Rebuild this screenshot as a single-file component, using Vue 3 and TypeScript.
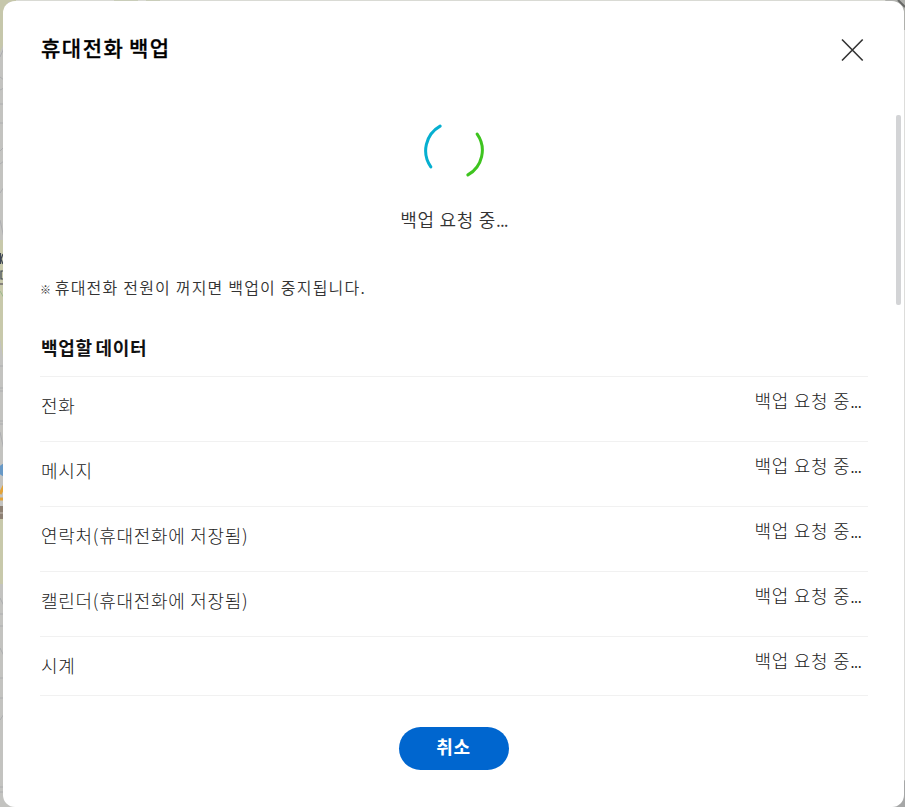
<script setup lang="ts">
interface BackupItem {
  name: string
  status: string
}

const status = '백업 요청 중'
const items: BackupItem[] = [
  { name: '전화', status },
  { name: '메시지', status },
  { name: '연락처(휴대전화에 저장됨)', status },
  { name: '캘린더(휴대전화에 저장됨)', status },
  { name: '시계', status },
]
</script>

<template>
  <div class="backdrop">
    <svg class="map" width="905" height="807" viewBox="0 0 905 807" aria-hidden="true">
      <rect width="905" height="807" fill="#c3c3c0" />
      <path d="M0 0H130V2H8V30L3 45L0 52Z" fill="#c6c7ab" />
      <path d="M16 0H890V1H16Z" fill="#d9dad4" />
      <path d="M114 0H138V1H114Z M146 0H160V1H146Z" fill="#c9cdb9" />
      <path d="M0 240H5V352L3 358L0 338Z M0 519H5V584H0Z" fill="#c8c9ab" />
      <path d="M0 57l4-9M0 77l4 3M0 90l4-2M0 104h4M0 123h4M0 151l4-4M0 164l4-3M0 193l4-6M0 220l4 18M0 366h4M0 388h4M0 391h4M0 421h4M0 424h4M0 432l4 18M0 598l4 8M0 614h4M0 626h4M0 648l4 8M0 678h4M0 698h4M0 720l4-6M0 787h4M0 792h4" stroke="#adaeb0" fill="none" />
      <path d="M.5 253v11M3 254l-2 5 2 5M4 271H1v8h3" stroke="#3e4653" stroke-width="1.2" fill="none" />
      <path d="M0 284h3" stroke="#85827c" stroke-width="2" />
      <path d="M0 291l4 7" stroke="#9dba8d" />
      <circle cx="5" cy="470" r="6.5" fill="#6899c6" />
      <path d="M0 494l4-8M0 499h4" stroke="#e3a338" stroke-width="3" />
      <rect y="506" width="4" height="13" fill="#8d8073" />
      <path d="M0 513h4" stroke="#aaa095" stroke-width="2" />
      <path d="M885 0H905V34Z" fill="#b0b1ad" />
      <path d="M898 0L905 7" stroke="#686967" stroke-width="2" />
      <path d="M904 30V780" stroke="#dddddb" stroke-width="2" />
      <path d="M885 807H905V780Z" fill="#a6a7a7" />
    </svg>

    <section class="dialog" role="dialog" aria-labelledby="dialog-title">
      <header class="header">
        <h1 id="dialog-title" class="title">휴대전화 백업</h1>
        <button class="close" type="button" aria-label="닫기">
          <svg width="24" height="24" viewBox="0 0 24 24">
            <path d="M2 1.5L22.7 22.5M22.7 1.5L2 22.5" />
          </svg>
        </button>
      </header>

      <main class="body">
        <div class="progress">
          <svg class="spinner" width="64" height="64" viewBox="0 0 64 64" aria-hidden="true">
            <path class="arc-blue" d="M18.1 8.1A28.2 28.2 0 0 0 8.8 48.9" />
            <path class="arc-green" d="M55.2 16.1A28.2 28.2 0 0 1 45.9 56.9" />
          </svg>
          <p class="progress-text">{{ status }}<span class="dots">...</span></p>
        </div>
        <p class="notice"><span class="mark">※</span> 휴대전화 전원이 꺼지면 백업이 중지됩니다.</p>
        <h2 class="subtitle">백업할 데이터</h2>
        <ul class="list">
          <li v-for="item in items" :key="item.name" class="row">
            <span class="name">{{ item.name }}</span>
            <span class="state">{{ item.status }}<span class="dots">...</span></span>
          </li>
        </ul>
      </main>

      <footer class="footer">
        <button class="cancel" type="button">취소</button>
      </footer>
      <div class="scrollbar"></div>
    </section>
  </div>
</template>

<style>
body {
  margin: 0;
  overflow: hidden;
}
</style>

<style scoped>
.backdrop {
  position: relative;
  box-sizing: border-box;
  width: 905px;
  height: 807px;
  padding: 1px 1px 0 3px;
  overflow: hidden;
  font-family: "Noto Sans CJK KR", sans-serif;
  color: #333;
}
.map {
  position: absolute;
  left: 0;
  top: 0;
}
.dialog {
  position: relative;
  box-sizing: border-box;
  display: flex;
  flex-direction: column;
  height: 806px;
  padding: 0 37px;
  border-radius: 12px;
  background: #fff;
}
h1, h2, p, ul {
  margin: 0;
  padding: 0;
}
.header {
  display: flex;
  justify-content: space-between;
  height: 99px;
}
.title {
  padding: 30px 0 0 1px;
  font-size: 21px;
  line-height: 32px;
  font-weight: 500;
  letter-spacing: 1.5px;
  word-spacing: -1.5px;
  color: #000;
  -webkit-text-stroke: 0.3px #000;
}
.close {
  width: 24px;
  height: 24px;
  margin: 37px 3px 0 0;
  padding: 0;
  border: 0;
  background: none;
}
.close svg {
  display: block;
  fill: none;
  stroke: #333;
  stroke-width: 1.6;
}
.progress {
  display: flex;
  flex-direction: column;
  align-items: center;
  height: 174px;
  padding-top: 18px;
  box-sizing: border-box;
}
.spinner {
  fill: none;
  stroke-width: 3;
  stroke-linecap: round;
}
.arc-blue {
  stroke: #06afd0;
}
.arc-green {
  stroke: #3ec41f;
}
.progress-text {
  margin-top: 24px;
  padding-left: 1px;
  font-size: 18px;
  line-height: 26px;
  font-weight: 350;
  letter-spacing: 0.7px;
}
.dots {
  letter-spacing: -0.9px;
}
.notice {
  font-size: 16px;
  line-height: 26px;
  font-weight: 350;
  letter-spacing: 1.2px;
}
.mark {
  font-size: 11px;
  letter-spacing: 0;
  margin-right: -1px;
}
.subtitle {
  margin-top: 32px;
  padding-left: 1px;
  font-size: 18px;
  line-height: 26px;
  font-weight: 700;
  letter-spacing: 0.7px;
  word-spacing: -2px;
  color: #111;
}
.list {
  list-style: none;
  margin-top: 16px;
  width: 828px;
  border-bottom: 1px solid #f1f1f1;
}
.row {
  display: flex;
  justify-content: space-between;
  box-sizing: border-box;
  height: 65px;
  padding: 10px 7px 0 1px;
  border-top: 1px solid #f1f1f1;
  font-size: 18px;
  line-height: 26px;
  font-weight: 300;
  letter-spacing: 0.7px;
  color: #222;
}
.row:last-child {
  height: 59px;
}
.name {
  padding-top: 5px;
}
.footer {
  display: flex;
  justify-content: center;
  padding-top: 31px;
}
.cancel {
  width: 110px;
  height: 43px;
  padding: 0 0 5px;
  border: 0;
  border-radius: 22px;
  background: #0066cf;
  color: #fff;
  font: 700 18px/38px "Noto Sans CJK KR", sans-serif;
  letter-spacing: 0.8px;
}
.scrollbar {
  position: absolute;
  right: 3px;
  top: 114px;
  width: 5px;
  height: 190px;
  border-radius: 2px;
  background: #d3d4d6;
}
</style>
